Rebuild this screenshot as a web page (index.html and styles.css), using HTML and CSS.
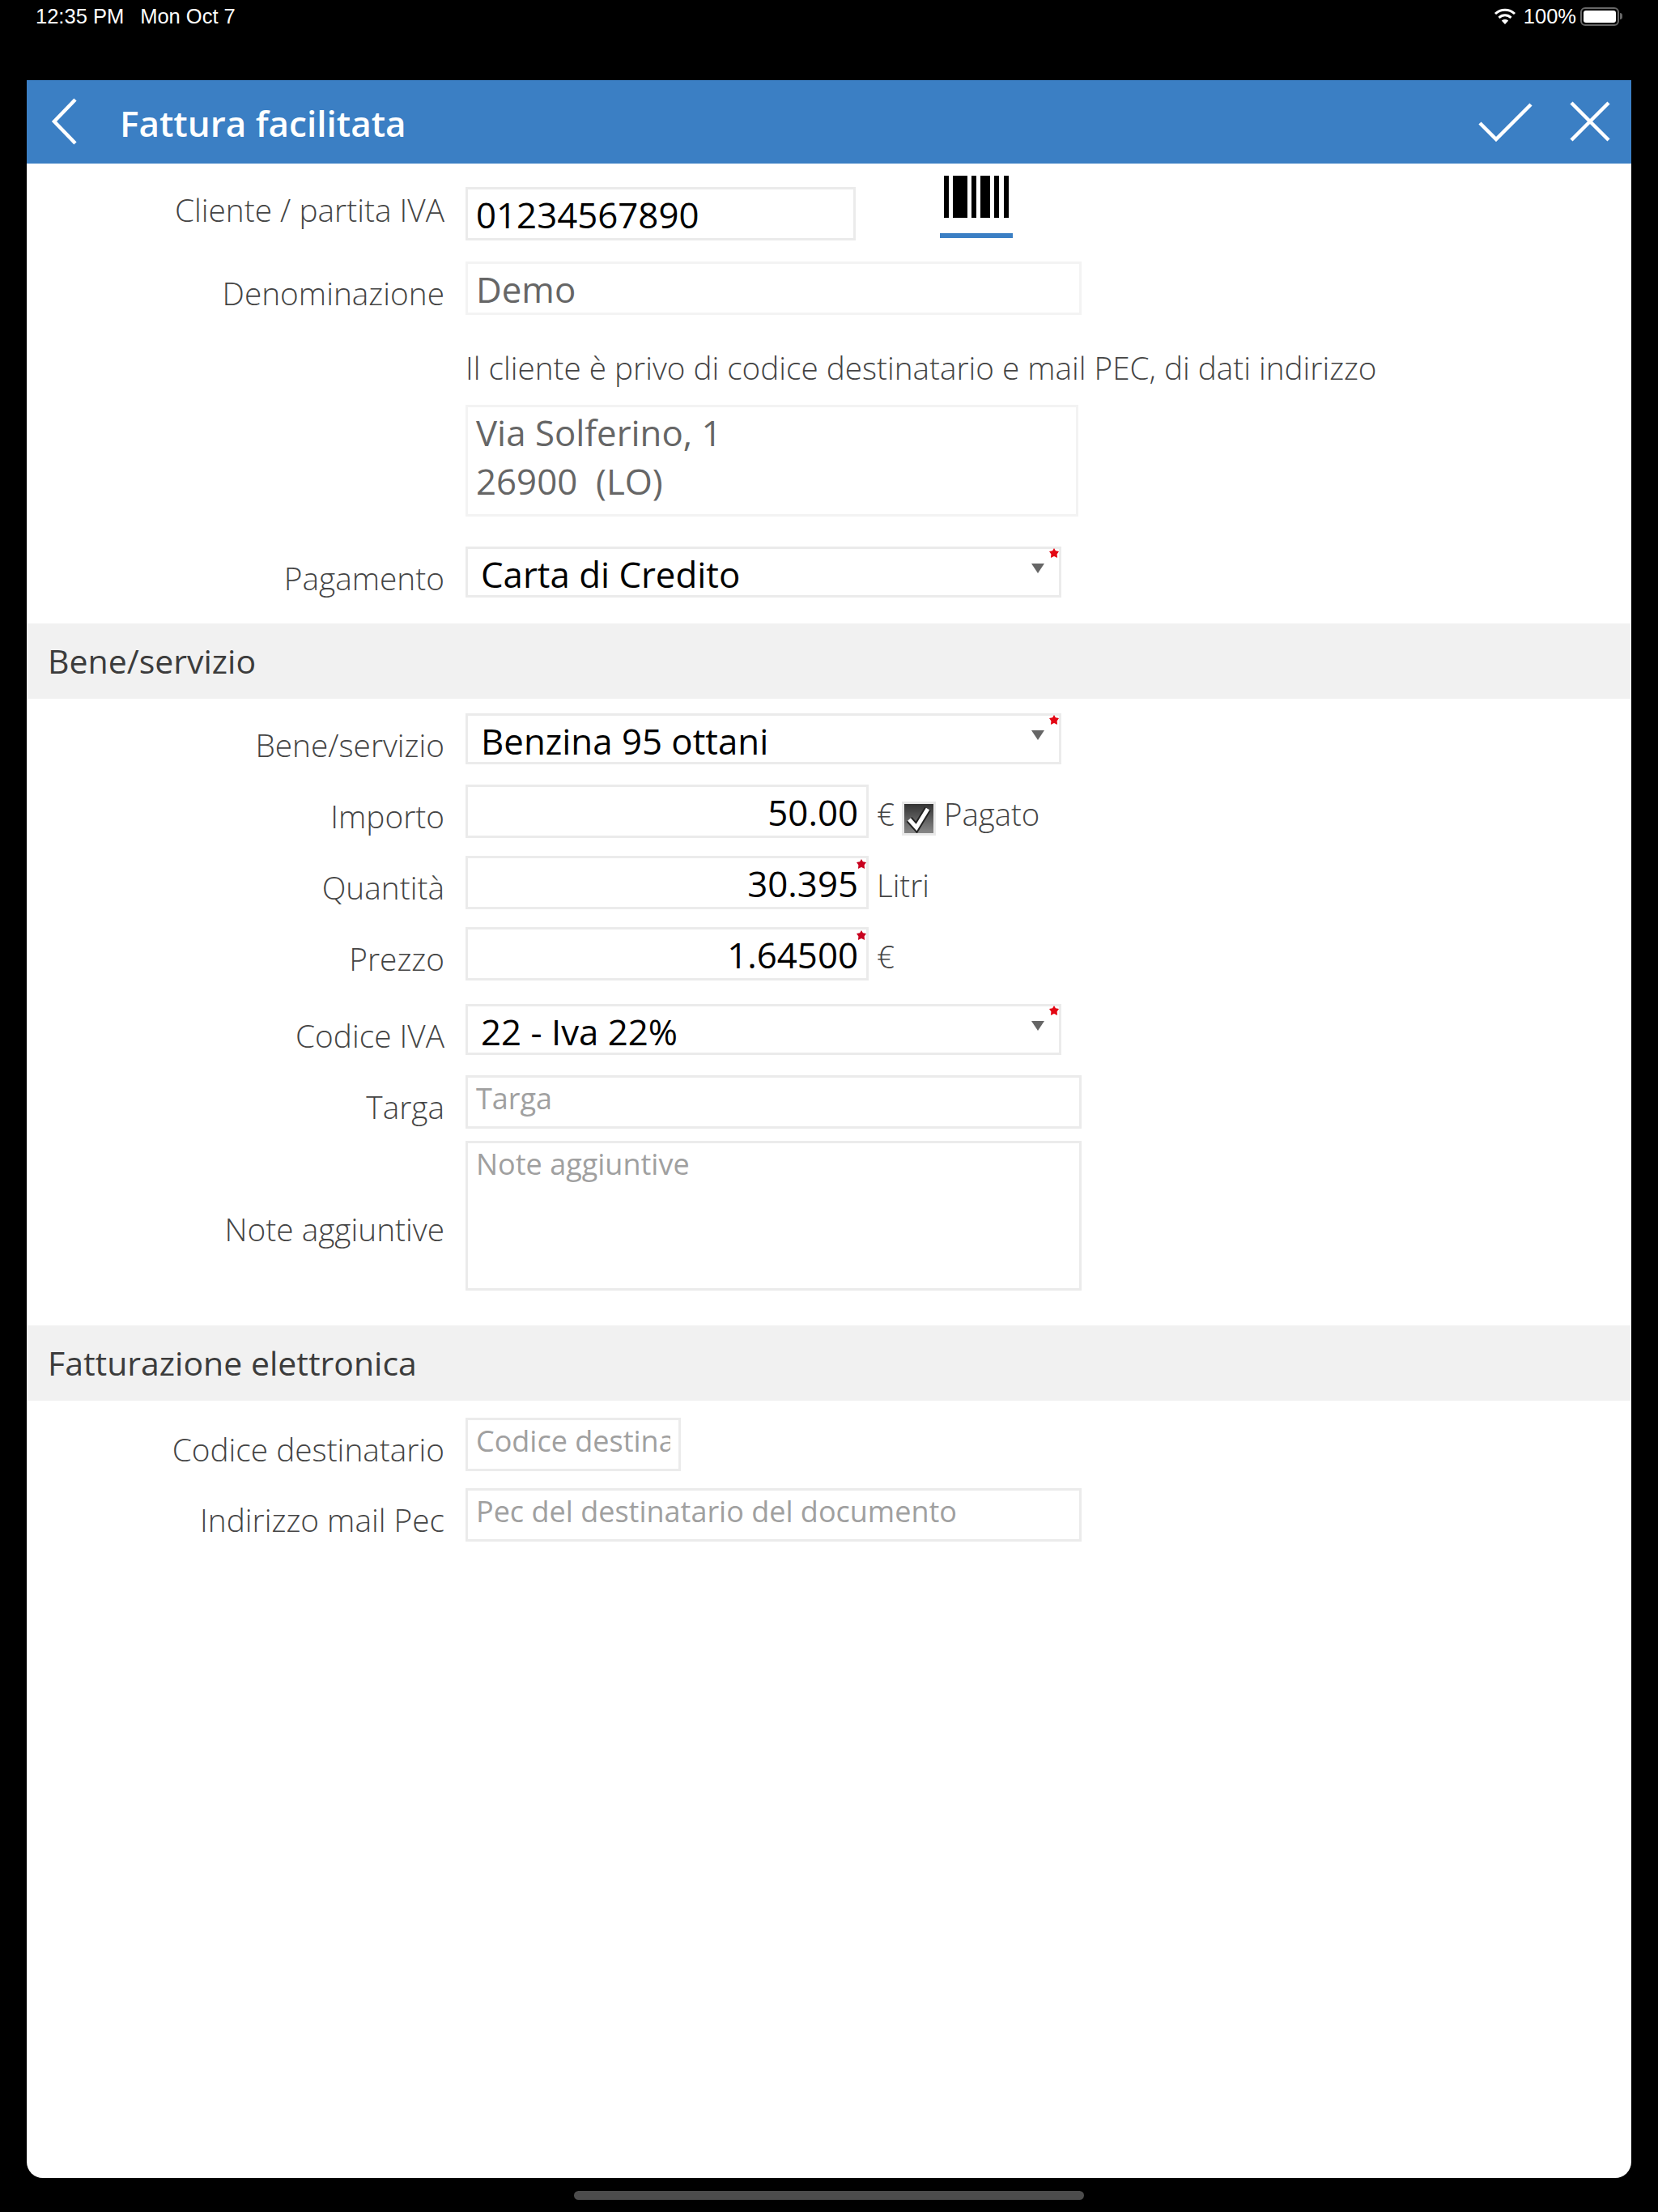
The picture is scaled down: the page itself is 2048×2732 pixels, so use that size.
FILE: index.html
```html
<!DOCTYPE html>
<html lang="it">
<head>
    <meta charset="UTF-8">
    <meta name="viewport" content="width=device-width, initial-scale=1.0">
    <title>Fattura facilitata</title>
    <link rel="stylesheet" href="styles.css">
</head>
<body>
    <div class="statusbar">
        <div class="status-left"><span>12:35 PM</span><span>Mon Oct 7</span></div>
        <div class="status-right">
            <svg class="wifi" width="28" height="22" viewBox="0 0 28 22">
                <path d="M14 21l-4.200-4.600a6.200 6.200 0 0 1 8.400 0z" fill="#fff"/>
                <path d="M6.500 12.800a11 11 0 0 1 15 0" fill="none" stroke="#fff" stroke-width="3"/>
                <path d="M2 8a17.500 17.500 0 0 1 24 0" fill="none" stroke="#fff" stroke-width="3"/>
            </svg>
            <span>100%</span>
            <div class="battery"><div class="battery-fill"></div></div>
            <div class="battery-nub"></div>
        </div>
    </div>

    <div class="screen">
        <header class="topbar">
            <svg class="back" width="34" height="60" viewBox="0 0 34 60">
                <path d="M30 3L4 30l26 27" fill="none" stroke="#fff" stroke-width="4.500"/>
            </svg>
            <h1>Fattura facilitata</h1>
            <svg class="confirm" width="68" height="50" viewBox="0 0 68 50">
                <path d="M3 27l20 20L66 4" fill="none" stroke="#fff" stroke-width="4.500"/>
            </svg>
            <svg class="close" width="50" height="50" viewBox="0 0 50 50">
                <path d="M2 2l46 46M48 2L2 48" fill="none" stroke="#fff" stroke-width="4.500"/>
            </svg>
        </header>

        <section class="group group-client">
            <div class="row">
                <div class="label label-up">Cliente / partita IVA</div>
                <div class="field field-code strong">01234567890</div>
                <div class="scan">
                    <svg width="80" height="52" viewBox="0 0 80 52">
                        <path d="M0 0h6v52H0zM11 0h18v52H11zM34 0h6v52h-6zM45 0h12v52H45zM62 0h6v52h-6zM74 0h6v52h-6z" fill="#000"/>
                    </svg>
                    <div class="scan-line"></div>
                </div>
            </div>
            <div class="row row-name">
                <div class="label">Denominazione</div>
                <div class="field field-wide readonly">Demo</div>
            </div>
            <div class="row row-info">
                <div class="label label-empty"></div>
                <div class="info">Il cliente è privo di codice destinatario e mail PEC, di dati indirizzo</div>
            </div>
            <div class="row row-address">
                <div class="label label-empty"></div>
                <div class="field field-address readonly">Via Solferino, 1<br>26900&nbsp; (LO)</div>
            </div>
            <div class="row">
                <div class="label">Pagamento</div>
                <div class="field select strong">Carta di Credito<span class="arrow"></span><span class="star"></span></div>
            </div>
        </section>

        <h2 class="band">Bene/servizio</h2>

        <section class="group group-goods">
            <div class="row">
                <div class="label">Bene/servizio</div>
                <div class="field select strong">Benzina 95 ottani<span class="arrow"></span><span class="star"></span></div>
            </div>
            <div class="row row-amount">
                <div class="label">Importo</div>
                <div class="field field-num strong">50.00</div>
                <span class="unit">€</span>
                <div class="checkbox">
                    <svg width="36" height="36" viewBox="0 0 36 36">
                        <path d="M6 19l9 10L29 6" fill="none" stroke="#222" stroke-width="9"/>
                        <path d="M6 19l9 10L29 6" fill="none" stroke="#fff" stroke-width="5"/>
                    </svg>
                </div>
                <span class="unit">Pagato</span>
            </div>
            <div class="row row-qty">
                <div class="label">Quantità</div>
                <div class="field field-num strong">30.395<span class="star star-num"></span></div>
                <span class="unit">Litri</span>
            </div>
            <div class="row row-price">
                <div class="label">Prezzo</div>
                <div class="field field-num strong">1.64500<span class="star star-num"></span></div>
                <span class="unit">€</span>
            </div>
            <div class="row row-vat">
                <div class="label">Codice IVA</div>
                <div class="field select strong">22 - Iva 22%<span class="arrow"></span><span class="star"></span></div>
            </div>
            <div class="row row-plate">
                <div class="label">Targa</div>
                <div class="field field-wide hint">Targa</div>
            </div>
            <div class="row row-notes">
                <div class="label label-notes">Note aggiuntive</div>
                <div class="field field-notes hint">Note aggiuntive</div>
            </div>
        </section>

        <h2 class="band">Fatturazione elettronica</h2>

        <section class="group group-einvoice">
            <div class="row row-dest">
                <div class="label">Codice destinatario</div>
                <div class="field field-dest hint"><span class="clip">Codice destinatario</span></div>
            </div>
            <div class="row">
                <div class="label">Indirizzo mail Pec</div>
                <div class="field field-wide hint">Pec del destinatario del documento</div>
            </div>
        </section>
    </div>

    <div class="homebar"></div>
</body>
</html>
```

FILE: styles.css
```css
/* Base */
body {
    margin: 0;
    height: 2732px;
    overflow: hidden;
    background: #000;
    font-family: "Open Sans", sans-serif;
    color: #000;
}

/* Status bar */
.statusbar {
    height: 99px;
    box-sizing: border-box;
    padding: 5px 44px 0;
    display: flex;
    justify-content: space-between;
    align-items: flex-start;
    color: #fff;
    font-family: "Liberation Sans", sans-serif;
    font-size: 25.500px;
    line-height: 30px;
}

.status-left {
    display: flex;
    gap: 20px;
}

.status-right {
    display: flex;
    align-items: center;
}

.wifi {
    margin-right: 9px;
}

.battery {
    width: 48px;
    height: 23px;
    box-sizing: border-box;
    margin-left: 5px;
    padding: 2px;
    border: 2px solid #666;
    border-radius: 6px;
}

.battery-fill {
    height: 100%;
    background: #fff;
    border-radius: 3px;
}

.battery-nub {
    width: 3px;
    height: 8px;
    margin-left: 1px;
    background: #666;
    border-radius: 0 3px 3px 0;
}

/* Screen */
.screen {
    margin: 0 33px;
    height: 2591px;
    background: #fff;
    border-radius: 0 0 20px 20px;
    overflow: hidden;
}

.topbar {
    height: 103px;
    box-sizing: border-box;
    padding: 0 26px 0 30px;
    display: flex;
    align-items: center;
    background: #3b7fc4;
    color: #fff;
}

.topbar h1 {
    margin: 3px 0 0 51px;
    flex: 1;
    font-size: 44px;
    font-weight: 600;
}

.back {
    margin-top: -2px;
}

.confirm {
    margin: -2px 46px 0 0;
}

.close {
    margin-top: -2px;
}

/* Sections */
.band {
    margin: 0;
    height: 93px;
    padding-left: 26px;
    background: #f1f1f1;
    color: #3c3c3c;
    font-size: 41px;
    font-weight: 400;
    line-height: 93px;
}

.group-client {
    padding: 29px 0 32px;
}

.group-goods {
    padding: 18px 0 43px;
}

.group-einvoice {
    padding-top: 21px;
}

/* Rows */
.row {
    display: flex;
    align-items: center;
}

.label {
    align-self: flex-start;
    width: 516px;
    height: 60px;
    flex: none;
    box-sizing: border-box;
    margin-right: 26px;
    padding-top: 13px;
    text-align: right;
    color: #444;
    font-size: 38.800px;
    font-weight: 300;
    line-height: 52px;
}

.label-up {
    padding-top: 2px;
}

.label-notes {
    height: 185px;
    padding-top: 83px;
}

.label-empty {
    height: 0;
    padding: 0;
}

.row-name {
    margin-top: 26px;
}

.row-info {
    margin-top: 39px;
}

.row-address {
    margin-top: 19px;
    margin-bottom: 37px;
}

.row-amount {
    margin-top: 25px;
}

.row-qty {
    margin-top: 22px;
}

.row-price {
    margin-top: 22px;
}

.row-vat {
    margin-top: 29px;
}

.row-plate {
    margin-top: 25px;
}

.row-notes {
    margin-top: 15px;
}

.row-dest {
    margin-bottom: 21px;
}

/* Fields */
.field {
    position: relative;
    flex: none;
    box-sizing: border-box;
    height: 66px;
    padding: 1px 10px 0;
    border: 3px solid #ebebeb;
    font-size: 43.800px;
    line-height: 60px;
    white-space: nowrap;
}

.field-code {
    width: 482px;
}

.field-wide {
    width: 761px;
}

.field-address {
    width: 757px;
    height: 138px;
    padding-top: 1px;
}

.field-dest {
    width: 266px;
}

.field-notes {
    width: 761px;
    height: 185px;
}

.field-num {
    width: 498px;
    text-align: right;
}

.select {
    width: 736px;
    height: 63px;
    padding-left: 16px;
}

.readonly {
    border-color: #f3f3f3;
    color: #666;
}

.field.hint {
    padding-top: 1px;
    color: #a0a0a0;
    font-size: 36px;
    line-height: 50px;
}

.clip {
    display: block;
    overflow: hidden;
}

.arrow {
    position: absolute;
    top: 18px;
    right: 18px;
    width: 0;
    height: 0;
    border-left: 8px solid transparent;
    border-right: 8px solid transparent;
    border-top: 12px solid #666;
}

.star {
    position: absolute;
    top: -1px;
    right: 0;
    width: 12px;
    height: 12px;
    background: #e30613;
    clip-path: polygon(50% 0, 66% 28%, 100% 34%, 80% 62%, 84% 100%, 50% 84%, 16% 100%, 20% 62%, 0 34%, 34% 28%);
}

.star-num {
    top: 1px;
    background: #c8001e;
}

.info {
    color: #444;
    font-size: 38.700px;
    font-weight: 300;
    line-height: 53px;
    white-space: nowrap;
}

.unit {
    margin-left: 10px;
    padding-top: 6px;
    color: #444;
    font-size: 38.400px;
    font-weight: 300;
}

.checkbox {
    width: 36px;
    height: 36px;
    margin-left: 9px;
    margin-top: 18px;
    border: 3px solid #e9e9e9;
    background: linear-gradient(#333, #888);
}

.scan {
    align-self: flex-start;
    width: 90px;
    margin: -14px 0 0 104px;
    display: flex;
    flex-direction: column;
    align-items: center;
}

.scan-line {
    width: 90px;
    height: 6px;
    margin-top: 19px;
    background: #3b7fc4;
}

/* Home indicator */
.homebar {
    width: 630px;
    height: 11px;
    margin: 16px auto 0;
    background: #4c4c4c;
    border-radius: 6px;
}
```
